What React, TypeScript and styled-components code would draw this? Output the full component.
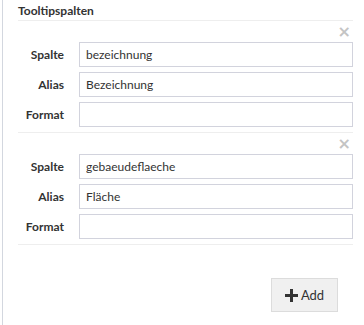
import * as React from 'react';
import styled, { createGlobalStyle } from 'styled-components';

type Column = { spalte: string; alias: string; format: string };

const initialColumns: Column[] = [
  { spalte: 'bezeichnung', alias: 'Bezeichnung', format: '' },
  { spalte: 'gebaeudeflaeche', alias: 'Fläche', format: '' }
];

const App = () => {
  const [columns, setColumns] = React.useState<Column[]>(initialColumns);

  const update = (index: number, key: keyof Column, value: string) => {
    setColumns(columns.map((c, i) => (i === index ? { ...c, [key]: value } : c)));
  };

  const remove = (index: number) => {
    setColumns(columns.filter((_, i) => i !== index));
  };

  const add = () => {
    setColumns([...columns, { spalte: '', alias: '', format: '' }]);
  };

  return (
    <>
      <GlobalStyle />
      <Panel>
        <Title>Tooltipspalten</Title>
        {columns.map((col, i) => (
          <Group key={i}>
            <CloseRow>
              <Close type='button' onClick={() => remove(i)}>×</Close>
            </CloseRow>
            <Row>
              <Label>Spalte</Label>
              <Input value={col.spalte} onChange={(e) => update(i, 'spalte', e.target.value)} />
            </Row>
            <Row>
              <Label>Alias</Label>
              <Input value={col.alias} onChange={(e) => update(i, 'alias', e.target.value)} />
            </Row>
            <Row>
              <Label>Format</Label>
              <Input value={col.format} onChange={(e) => update(i, 'format', e.target.value)} />
            </Row>
          </Group>
        ))}
        <Footer>
          <AddButton type='button' onClick={add}>
            <svg width='13' height='13' viewBox='0 0 13 13'>
              <path d='M5 0h3v5h5v3H8v5H5V8H0V5h5z' fill='#333' />
            </svg>
            Add
          </AddButton>
        </Footer>
      </Panel>
    </>
  );
};

export default App;

const GlobalStyle = createGlobalStyle`
  html, body {
    margin: 0;
    padding: 0;
    background: #fff;
  }
  body {
    font-family: Lato, "Open Sans", sans-serif;
    color: #333;
  }
`;

const Panel = styled.div`
  margin-left: 2px;
  border-left: 1px solid #d3d7df;
  min-height: 325px;
  box-sizing: border-box;
  padding: 3px 11px 0 15px;
`;

const Title = styled.div`
  font-size: 12px;
  font-weight: 700;
  line-height: 16px;
  padding-bottom: 1px;
  border-bottom: 1px solid #eeeeee;
`;

const Group = styled.div`
  display: flex;
  flex-direction: column;
  gap: 5px;
  padding-bottom: 5px;
  border-bottom: 1px solid #eeeeee;
`;

const CloseRow = styled.div`
  display: flex;
  justify-content: flex-end;
  height: 16px;
`;

const Close = styled.button`
  border: none;
  background: none;
  padding: 0 2px 0 0;
  margin: 4px 0 0;
  font-size: 16px;
  line-height: 14px;
  height: 14px;
  color: #c4c4c4;
  font-weight: 700;
  font-family: "DejaVu Sans", sans-serif;
  cursor: pointer;
`;

const Row = styled.div`
  display: grid;
  grid-template-columns: 46px 1fr;
  column-gap: 15px;
  align-items: center;
`;

const Label = styled.label`
  font-size: 12px;
  font-weight: 700;
  text-align: right;
`;

const Input = styled.input`
  box-sizing: border-box;
  height: 25px;
  width: 100%;
  border: 1px solid #d2d3dd;
  border-radius: 0;
  padding: 0 6px;
  font-family: inherit;
  font-size: 12px;
  color: #333;
  outline: none;
`;

const Footer = styled.div`
  display: flex;
  justify-content: flex-end;
  padding: 33px 15px 0 0;
`;

const AddButton = styled.button`
  display: flex;
  align-items: center;
  gap: 3px;
  box-sizing: border-box;
  width: 67px;
  height: 34px;
  justify-content: center;
  background: #f0f0f0;
  border: 1px solid #dcdcdc;
  border-radius: 0;
  font-family: inherit;
  font-size: 13px;
  color: #333;
  cursor: pointer;
`;
